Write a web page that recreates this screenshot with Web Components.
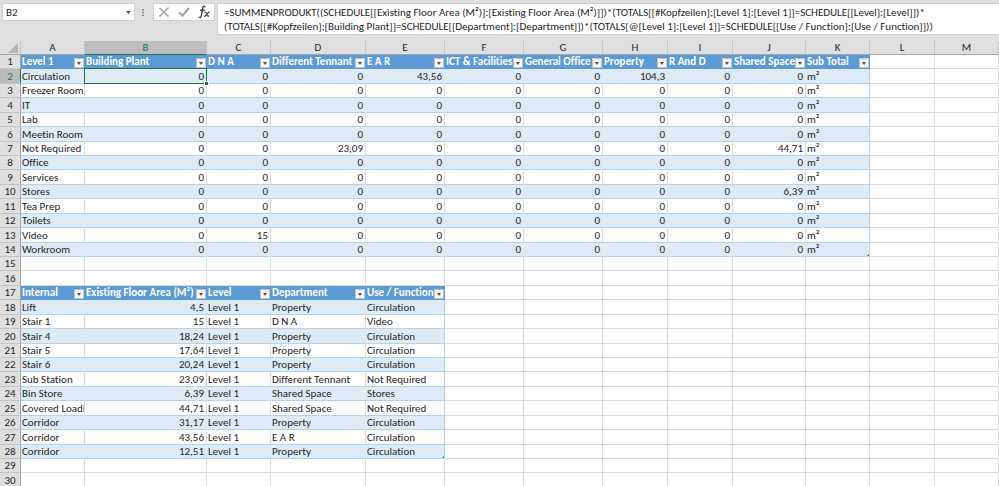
<!DOCTYPE html>
<html lang="de">
<head>
<meta charset="utf-8">
<title>B2</title>
<style>
    body {
        margin: 0;
        height: 100vh;
        overflow: hidden;
        background: #dfdfdf;
        color: #1f1f1f;
        font-family: Carlito, Lato, sans-serif;
        font-size: 11px;
        font-variant-ligatures: none;
    }
</style>
</head>
<body>
<work-book>
    <name-box slot="bar" value="B2"></name-box>
    <formula-bar slot="bar">=SUMMENPRODUKT((SCHEDULE[[Existing Floor Area (M²)]:[Existing Floor Area (M²)]])*(TOTALS[[#Kopfzeilen];[Level 1]:[Level 1]]=SCHEDULE[[Level]:[Level]])*
(TOTALS[[#Kopfzeilen];[Building Plant]]=SCHEDULE[[Department]:[Department]])*(TOTALS[@[Level 1]:[Level 1]]=SCHEDULE[[Use / Function]:[Use / Function]]))</formula-bar>
    <sheet-grid></sheet-grid>
</work-book>

<script>
// column letter -> width, the last one takes what is left
const COLUMNS = [
    ['A', 64], ['B', 122], ['C', 64], ['D', 95], ['E', 79], ['F', 79], ['G', 79],
    ['H', 65], ['I', 65], ['J', 73], ['K', 64], ['L', 65], ['M', null]
];
const ROW_COUNT = 30;

// rooms of the TOTALS table, only the non-zero values are listed
const TOTALS_HEAD = ['Level 1', 'Building Plant', 'D N A', 'Different Tennant', 'E A R', 'ICT & Facilities',
    'General Office', 'Property', 'R And D', 'Shared Space', 'Sub Total'];
const TOTALS = [
    ['Circulation', { E: '43,56', H: '104,3' }],
    ['Freezer Room', {}],
    ['IT', {}],
    ['Lab', {}],
    ['Meetin Room', {}],
    ['Not Required', { D: '23,09', J: '44,71' }],
    ['Office', {}],
    ['Services', {}],
    ['Stores', { J: '6,39' }],
    ['Tea Prep', {}],
    ['Toilets', {}],
    ['Video', { C: '15' }],
    ['Workroom', {}]
];

const SCHEDULE_HEAD = ['Internal', 'Existing Floor Area (M²)', 'Level', 'Department', 'Use / Function'];
const SCHEDULE = [
    ['Lift', '4,5', 'Level 1', 'Property', 'Circulation'],
    ['Stair 1', '15', 'Level 1', 'D N A', 'Video'],
    ['Stair 4', '18,24', 'Level 1', 'Property', 'Circulation'],
    ['Stair 5', '17,64', 'Level 1', 'Property', 'Circulation'],
    ['Stair 6', '20,24', 'Level 1', 'Property', 'Circulation'],
    ['Sub Station', '23,09', 'Level 1', 'Different Tennant', 'Not Required'],
    ['Bin Store', '6,39', 'Level 1', 'Shared Space', 'Stores'],
    ['Covered Loadi', '44,71', 'Level 1', 'Shared Space', 'Not Required'],
    ['Corridor', '31,17', 'Level 1', 'Property', 'Circulation'],
    ['Corridor', '43,56', 'Level 1', 'E A R', 'Circulation'],
    ['Corridor', '12,51', 'Level 1', 'Property', 'Circulation']
];

class WorkBook extends HTMLElement {
    constructor() {
        super();
        this.attachShadow({ mode: 'open' }).innerHTML = `
            <style>
                :host { display: block; }
                .bar {
                    display: flex;
                    align-items: flex-start;
                    gap: 2px;
                    padding: 3px 0 6px 2px;
                }
            </style>
            <div class="bar"><slot name="bar"></slot></div>
            <slot></slot>
        `;
    }
}

class NameBox extends HTMLElement {
    constructor() {
        super();
        this.attachShadow({ mode: 'open' });
    }

    connectedCallback() {
        this.shadowRoot.innerHTML = `
            <style>
                :host { display: flex; flex: none; }
                .box {
                    display: flex;
                    box-sizing: border-box;
                    width: 133px;
                    height: 18px;
                    background: #fff;
                    border: 1px solid #d0d0d0;
                }
                input {
                    flex: 1;
                    min-width: 0;
                    padding: 0 3px;
                    border: 0;
                    outline: 0;
                    background: none;
                    color: inherit;
                    font: inherit;
                }
                button {
                    display: grid;
                    place-items: center;
                    width: 11px;
                    padding: 0;
                    border: 0;
                    background: none;
                }
                .grip { width: 16px; height: 18px; }
            </style>
            <div class="box">
                <input type="text" aria-label="Namenfeld" value="${this.getAttribute('value')}">
                <button type="button" aria-label="Namen">
                    <svg width="5" height="3" viewBox="0 0 5 3"><path d="M0 0h5L2.500 3z" fill="#555"/></svg>
                </button>
            </div>
            <svg class="grip" viewBox="0 0 16 18" fill="#888">
                <path d="M7 6h2v1.500H7zM7 8.800h2v1.500H7zM7 11.600h2v1.500H7z"/>
            </svg>
        `;
    }
}

class FormulaBar extends HTMLElement {
    constructor() {
        super();
        this.attachShadow({ mode: 'open' });
    }

    connectedCallback() {
        this.shadowRoot.innerHTML = `
            <style>
                :host {
                    display: flex;
                    flex: 1;
                    align-items: flex-start;
                    gap: 2px;
                    min-width: 0;
                }
                .tools {
                    display: flex;
                    flex: none;
                    box-sizing: border-box;
                    height: 18px;
                    border: 1px solid #d0d0d0;
                    background: #fff;
                }
                button {
                    display: grid;
                    place-items: center;
                    width: 20px;
                    padding: 0;
                    border: 0;
                    background: none;
                }
                textarea {
                    flex: 1;
                    box-sizing: border-box;
                    min-width: 0;
                    height: 32px;
                    padding: 2px 6px 0;
                    border: 1px solid #d0d0d0;
                    border-right: 0;
                    outline: 0;
                    resize: none;
                    overflow: hidden;
                    white-space: pre;
                    background: #fff;
                    color: inherit;
                    font: inherit;
                    line-height: 14px;
                }
            </style>
            <div class="tools">
                <button type="button" aria-label="Abbrechen">
                    <svg width="12" height="12" viewBox="0 0 12 12" fill="none" stroke="#a0a0a0" stroke-width="1.500">
                        <path d="M1.500 2l9 8.500M10.500 1.500L1.500 10.500"/>
                    </svg>
                </button>
                <button type="button" aria-label="Eingeben">
                    <svg width="12" height="12" viewBox="0 0 12 12" fill="none" stroke="#a0a0a0" stroke-width="2">
                        <path d="M1 6.500l3.500 3L11 2"/>
                    </svg>
                </button>
                <button type="button" aria-label="Funktion einfügen">
                    <svg width="14" height="14" viewBox="0 0 14 14" fill="none" stroke="#444" stroke-linecap="round">
                        <path stroke-width="1.400" d="M8 1.800C7 .8 6 1.500 5.700 3L4.300 10.800C4 12.400 3 13 2.200 12.300M3.500 5.200h4"/>
                        <path stroke-width="1.200" d="M8 7.200c1.200-.5 1.500.6 1.900 2.100s.7 2.400 1.900 1.700M12 7L7.800 11.300"/>
                    </svg>
                </button>
            </div>
            <textarea rows="2" aria-label="Bearbeitungsleiste" spellcheck="false"></textarea>
        `;
        this.shadowRoot.querySelector('textarea').value = this.textContent;
    }
}

class FilterButton extends HTMLElement {
    constructor() {
        super();
        this.attachShadow({ mode: 'open' }).innerHTML = `
            <style>
                :host { display: block; flex: none; }
                button {
                    display: grid;
                    place-items: center;
                    box-sizing: border-box;
                    width: 10px;
                    height: 10px;
                    padding: 0;
                    border: 1px solid #c4c4c4;
                    background: #f8f8f8;
                }
            </style>
            <button type="button" aria-label="Filter">
                <svg width="4" height="3" viewBox="0 0 4 3"><path d="M0 0h4L2 3z" fill="#555"/></svg>
            </button>
        `;
    }
}

class SheetGrid extends HTMLElement {
    constructor() {
        super();
        this.attachShadow({ mode: 'open' });
        this.cells = {};
    }

    connectedCallback() {
        this.fillTotals();
        this.fillSchedule();
        this.cells.B2.cls += ' active';
        this.cells.K14.cls += ' corner';
        this.cells.E28.cls += ' corner';
        this.render();
    }

    fillTotals() {
        TOTALS_HEAD.forEach((text, i) => {
            this.cells[COLUMNS[i][0] + 1] = { text, cls: 'head' };
        });
        TOTALS.forEach(([room, values], r) => {
            const band = r % 2 ? 'tbl' : 'tbl band';
            const row = r + 2;
            this.cells['A' + row] = { text: room, cls: band };
            for (const [col] of COLUMNS.slice(1, 10)) {
                this.cells[col + row] = { text: values[col] || '0', cls: band + ' num' };
            }
            this.cells['K' + row] = { text: 'm²', cls: band + ' last' };
        });
    }

    fillSchedule() {
        SCHEDULE_HEAD.forEach((text, i) => {
            this.cells[COLUMNS[i][0] + 17] = { text, cls: 'head' };
        });
        SCHEDULE.forEach((entry, r) => {
            entry.forEach((text, i) => {
                let cls = r % 2 ? 'tbl' : 'tbl band';
                if (i === 1) cls += ' num';
                if (i === 4) cls += ' last';
                this.cells[COLUMNS[i][0] + (r + 18)] = { text, cls };
            });
        });
    }

    renderCell(id) {
        const cell = this.cells[id];
        if (!cell) return '<td></td>';
        const text = cell.text.replace('&', '&amp;');
        if (cell.cls === 'head') {
            return `<td class="head"><div><span>${text}</span><filter-button></filter-button></div></td>`;
        }
        return `<td class="${cell.cls}">${text}</td>`;
    }

    render() {
        const cols = COLUMNS.map(([, w]) => w ? `<col style="width: ${w}px">` : '<col>').join('');
        const letters = COLUMNS.map(([c]) => `<th scope="col"${c === 'B' ? ' class="on"' : ''}>${c}</th>`).join('');
        let rows = '';
        for (let r = 1; r <= ROW_COUNT; r++) {
            rows += `<tr><th scope="row"${r === 2 ? ' class="on"' : ''}>${r}</th>`
                + COLUMNS.map(([c]) => this.renderCell(c + r)).join('') + '</tr>';
        }

        this.shadowRoot.innerHTML = `
            <style>
                :host { display: block; }
                table {
                    width: 100%;
                    table-layout: fixed;
                    border-collapse: separate;
                    border-spacing: 0;
                    background: #fff;
                }
                col.nr { width: 21px; }
                th, td {
                    box-sizing: border-box;
                    height: 14px;
                    padding: 1px 2px 0 1px;
                    overflow: hidden;
                    white-space: nowrap;
                    line-height: 12px;
                    text-align: left;
                    border: 0 solid #dcdcdc;
                    border-width: 0 1px 1px 0;
                }
                /* 101 px for every 7 rows */
                tbody tr:nth-child(7n+2) > *,
                tbody tr:nth-child(7n+4) > *,
                tbody tr:nth-child(7n+6) > * { height: 15px; }

                th {
                    padding: 1px 0 0;
                    background: #dfdfdf;
                    font-weight: normal;
                    text-align: center;
                    border-color: #c4c4c4;
                }
                thead th { border-bottom-color: #a6a6a6; }
                tbody th { border-right-color: #a6a6a6; }
                th.on { background: #bdbdbd; color: #217346; }
                thead th.on { border-bottom-color: #217346; }
                tbody th.on { border-right-color: #217346; }
                thead svg { display: block; margin-left: auto; }

                .head {
                    padding: 1px 0 0 1px;
                    background: #5b9bd5;
                    border-color: #5b9bd5;
                    color: #fff;
                    font-weight: bold;
                }
                .head div { display: flex; align-items: flex-end; height: 12px; }
                .head span { flex: 1; min-width: 0; }
                .tbl { border-bottom-color: #b4d3ee; }
                .band { background: #ddebf7; border-right-color: #ddebf7; }
                .last { border-right-color: #b4d3ee; }
                .num { text-align: right; }

                .active, .corner { position: relative; overflow: visible; }
                .active::before {
                    content: "";
                    position: absolute;
                    inset: -1px;
                    border: 1px solid #217346;
                }
                .active::after {
                    content: "";
                    position: absolute;
                    right: -2px;
                    bottom: -2px;
                    width: 3px;
                    height: 3px;
                    background: #217346;
                    outline: 1px solid #fff;
                }
                .corner::after {
                    content: "";
                    position: absolute;
                    right: 0;
                    bottom: 0;
                    border: 1px solid #3f62b8;
                    border-top-color: transparent;
                    border-left-color: transparent;
                }
            </style>
            <table>
                <colgroup><col class="nr">${cols}</colgroup>
                <thead>
                    <tr>
                        <th><svg width="12" height="11" viewBox="0 0 12 11"><path d="M10 0v10H0z" fill="#b4b4b4"/></svg></th>
                        ${letters}
                    </tr>
                </thead>
                <tbody>${rows}</tbody>
            </table>
        `;
    }
}

customElements.define('filter-button', FilterButton);
customElements.define('name-box', NameBox);
customElements.define('formula-bar', FormulaBar);
customElements.define('sheet-grid', SheetGrid);
customElements.define('work-book', WorkBook);
</script>
</body>
</html>
